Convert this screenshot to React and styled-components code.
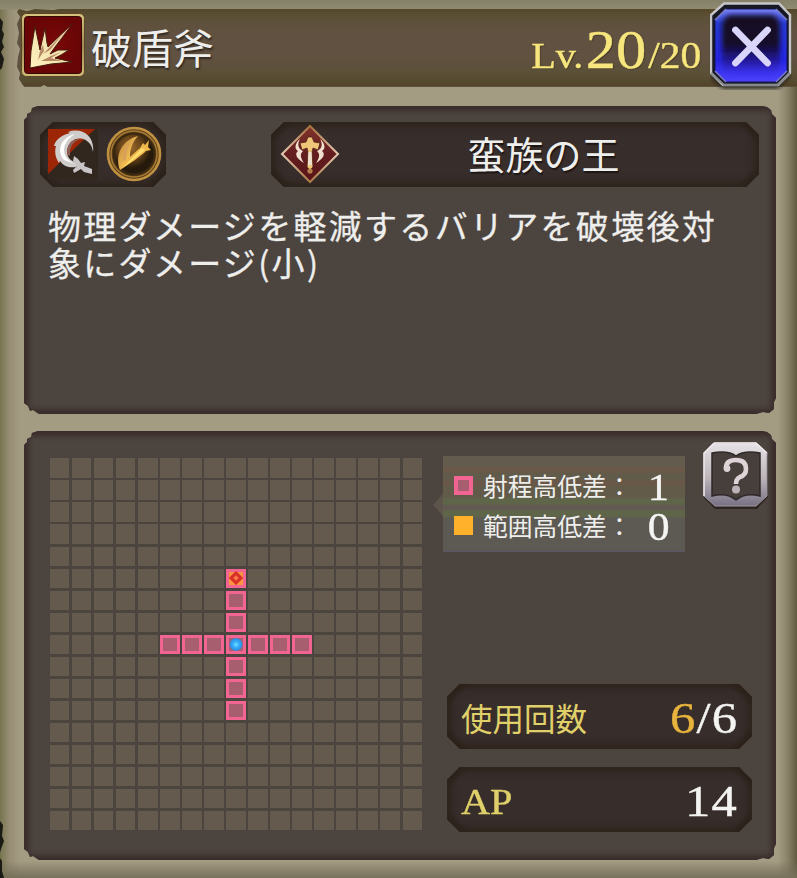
import React from 'react'
import styled, { createGlobalStyle } from 'styled-components'

const SIZE = 17
const CENTER = 8

const cells = Array.from({ length: SIZE * SIZE }, (_, i) => {
    const x = (i % SIZE) - CENTER
    const y = Math.floor(i / SIZE) - CENTER
    if (x === 0 && y === 0) return 'self'
    if (x === 0 && y === -3) return 'target'
    if ((x === 0 && Math.abs(y) <= 3) || (y === 0 && Math.abs(x) <= 3)) return 'range'
    return 'empty'
})

const SkillIcon = () => (
    <svg width="64" height="64" viewBox="0 0 64 64">
        <defs>
            <linearGradient id="frame" x1="0" y1="0" x2="0" y2="1">
                <stop offset="0" stopColor="#d8c57f" />
                <stop offset="0.5" stopColor="#a08a55" />
                <stop offset="1" stopColor="#d2bd78" />
            </linearGradient>
            <linearGradient id="slash" x1="0" y1="1" x2="1" y2="0">
                <stop offset="0" stopColor="#fff3c0" />
                <stop offset="0.6" stopColor="#f1dfab" />
                <stop offset="1" stopColor="#d89a82" />
            </linearGradient>
            <radialGradient id="red">
                <stop offset="0" stopColor="#7c0808" />
                <stop offset="1" stopColor="#680506" />
            </radialGradient>
        </defs>
        <rect x="0.5" y="0.5" width="63" height="63" rx="5" fill="url(#frame)" stroke="#594724" />
        <rect x="3.5" y="3.5" width="57" height="57" rx="3" fill="url(#red)" stroke="#350908" />
        <path
            d="M9 55 L10 38 L14 13 L17 27 L19 37 L24 15 L26 30 L27 34 L52 10 L41 25 L34 34 L29 41 L37 37 L48 37 L40 42 L34 45 L51 49 L30 51 Z"
            fill="url(#slash)"
            stroke="#45190d"
            strokeWidth="1"
        />
        <path d="M17 47 L19 38 L22 32 L23 38 Z M22 41 L40 23 L29 37 Z M20 48 L30 43 L40 39 L30 45 L41 48 Z" fill="#8c4a30" opacity="0.6" />
    </svg>
)

const CloseIcon = () => (
    <svg width="82" height="88" viewBox="0 0 82 88">
        <defs>
            <linearGradient id="blue" x1="0" y1="0" x2="0" y2="1">
                <stop offset="0" stopColor="#171022" />
                <stop offset="0.5" stopColor="#120d29" />
                <stop offset="0.75" stopColor="#211593" />
                <stop offset="1" stopColor="#3e35f6" />
            </linearGradient>
            <linearGradient id="rim" x1="0" y1="0" x2="0" y2="1">
                <stop offset="0" stopColor="#7d86fb" />
                <stop offset="0.2" stopColor="#263bd2" />
                <stop offset="0.7" stopColor="#2525e5" />
                <stop offset="1" stopColor="#4d43fc" />
            </linearGradient>
            <filter id="soft"><feGaussianBlur stdDeviation="2.2" /></filter>
            <filter id="inner"><feGaussianBlur stdDeviation="2.5" /></filter>
        </defs>
        <path d="M14 7 H69 L80 18 V73 L68 87 H13 L1 75 V17 Z" fill="#171412" opacity="0.8" filter="url(#soft)" />
        <path d="M14 1.5 H69 L80 13 V71 L68 83 H13 L1 71 V13 Z" fill="#171824" stroke="#c5c5c7" strokeWidth="2.5" />
        <path d="M14 83 L1 71 M68 83 L80 71 M13 83 H68" stroke="#868a8e" strokeWidth="2" />
        <path d="M16 7 H66 L77 18 V69 L66 80 H16 L5 69 V18 Z" fill="url(#rim)" stroke="#141750" strokeWidth="1" />
        <path d="M20 13 H62 Q70 16 70 24 V60 Q69 70 62 72 H20 Q12 70 12 60 V24 Q12 16 20 13 Z" fill="url(#blue)" filter="url(#inner)" />
        <path d="M5 18 L16 7 M66 7 L77 18 M77 69 L66 80 M16 80 L5 69" stroke="#777ac4" strokeWidth="1.5" />
        <path d="M25.5 28 L57.5 61 M57.5 28 L25.5 61" stroke="#d9d5fa" strokeWidth="6.8" strokeLinecap="round" />
    </svg>
)

const MoonSword = () => (
    <svg width="50" height="50" viewBox="0 0 50 50">
        <rect width="50" height="50" fill="#32271f" />
        <path d="M0 0 H47 L0 45 Z" fill="#9c2605" />
        <path
            d="M45 23 C47 7 34 -2 20 3 L22 4 C10 7 7 13 6 17 L8 17 C6 24 8 30 11 34 L12 32 C16 38 22 39 28 38 L31 34 C23 33 19 29 19 22 C20 13 27 8 35 10 C41 12 44 16 45 23 Z"
            fill="#cfcccc"
        />
        <path d="M27 5 C11 9 9 23 16 31 L27 35 C18 31 14 24 17 16 Q20 9 27 5 Z" fill="#fff" />
        <path d="M20 26 C17 15 25 9 34 10 C26 11 21 17 22 27 Z" fill="#8a625c" />
        <path d="M26 27 L30 30 L33 34 L37 33 L36 37 L44 40 L44 45 L36 43 L33 40 L26 44 L25 41 L29 37 L25 32 Z" fill="#c9c5c6" />
    </svg>
)

const GoldCoin = () => (
    <svg width="56" height="56" viewBox="0 0 56 56">
        <defs>
            <radialGradient id="coin" cx="0.42" cy="0.35">
                <stop offset="0" stopColor="#9a692b" />
                <stop offset="0.55" stopColor="#684419" />
                <stop offset="1" stopColor="#251a0c" />
            </radialGradient>
            <linearGradient id="gold" x1="0" y1="0" x2="1" y2="1">
                <stop offset="0" stopColor="#b87c34" />
                <stop offset="0.6" stopColor="#eebe55" />
                <stop offset="1" stopColor="#df9335" />
            </linearGradient>
        </defs>
        <circle cx="28" cy="28" r="26" fill="#5b3f19" stroke="#bf9140" strokeWidth="2.6" />
        <circle cx="28" cy="28" r="23" fill="none" stroke="#a67a34" strokeWidth="1.5" />
        <circle cx="28" cy="28" r="20.5" fill="url(#coin)" stroke="#3a2811" strokeWidth="2" />
        <path d="M14 44 C9 31 14 15 32 10 C26 17 24 23 24 31 Z" fill="url(#gold)" />
        <path d="M17 35 C16 25 20 18 27 13 C21 21 20 28 20 34 Z" fill="#d9a05a" />
        <path d="M14 44 L18 36 L34 22 L37 17 L39 19 L43 14 L42 21 L45 24 L40 25 L38 27 L29 34 Z" fill="#efb64a" />
        <path d="M15 43 L36 22 L39 24 L27 34 Z" fill="#ffdf70" />
    </svg>
)

const AxeCrest = () => (
    <svg width="60" height="60" viewBox="0 0 60 60">
        <defs>
            <linearGradient id="crest" x1="0" y1="0" x2="0" y2="1">
                <stop offset="0" stopColor="#803329" />
                <stop offset="0.5" stopColor="#641e20" />
                <stop offset="1" stopColor="#571418" />
            </linearGradient>
            <linearGradient id="edge" x1="0" y1="0" x2="0" y2="1">
                <stop offset="0" stopColor="#a7713f" />
                <stop offset="0.5" stopColor="#e5cbb4" />
                <stop offset="1" stopColor="#a97845" />
            </linearGradient>
        </defs>
        <path d="M30 2 L58 30 L30 58 L2 30 Z" fill="url(#crest)" stroke="url(#edge)" strokeWidth="2" />
        <path d="M20 15 C15 19 14 25 18 27 C14 30 17 35 24 39 C20 33 20 30 23 27 C18 25 17 20 20 15 Z" fill="#f2dfce" />
        <path d="M40 15 C45 19 46 25 42 27 C46 30 43 35 36 39 C40 33 40 30 37 27 C42 25 43 20 40 15 Z" fill="#f2dfce" />
        <path d="M20 19 L26 18 L28 13 H32 L34 18 L40 19 L38 26 L33 24 L32 28 L33 43 L30 46 L27 43 L28 28 L27 24 L22 26 Z" fill="#efc778" stroke="#51251b" strokeWidth="0.8" />
        <path d="M28.5 28 H31.5 L32 41 H28 Z" fill="#eee1d4" />
        <circle cx="30" cy="47" r="2.6" fill="#b47f47" />
    </svg>
)

const HelpBook = () => (
    <svg width="66" height="68" viewBox="0 0 66 68">
        <defs>
            <linearGradient id="silver" x1="0" y1="0" x2="0" y2="1">
                <stop offset="0" stopColor="#e6e2e5" />
                <stop offset="0.55" stopColor="#beb5b9" />
                <stop offset="1" stopColor="#777084" />
            </linearGradient>
        </defs>
        <path d="M12 4 H54 L65 15 V55 L54 67 H12 L1 56 Z" fill="#211b19" opacity="0.75" />
        <path d="M11 1 H53 L64 11 V54 L53 64 H12 L1 54 V11 Z" fill="url(#silver)" stroke="#9d969a" strokeWidth="1" />
        <path d="M11 1 H53 L64 11 M1 54 V11 L11 1" fill="none" stroke="#f3edf0" strokeWidth="1.5" />
        <path d="M9 11 Q25 8 33 14 Q41 8 57 11 V54 Q42 50 33 58 Q24 50 9 54 Z" fill="#463f3b" stroke="#2e2929" strokeWidth="1.5" />
        <path d="M23 26 Q23 18 33 18 Q43 18 43 27 Q43 33 37 35 Q33 37 33 42" fill="none" stroke="#ded3d7" strokeWidth="4.6" />
        <circle cx="24" cy="26.5" r="3.4" fill="#ded3d7" />
        <circle cx="33" cy="47.5" r="4" fill="#bdb2b9" />
    </svg>
)

const App = () => {
    return (
        <>
            <GlobalStyle />
            <Main>
                <Torn $top={14} width="8" height="60" viewBox="0 0 8 60">
                    <path d="M0 4 L3 8 L2 16 L4 20 L2 28 L4 33 L1 38 L4 45 L2 54 L0 56 Z" />
                </Torn>
                <Torn $top={818} width="8" height="60" viewBox="0 0 8 60">
                    <path d="M0 3 L3 7 L2 18 L4 23 L1 31 L0 35 Z M0 40 L2 43 L2 53 L4 60 H0 Z" />
                </Torn>
                <Header>
                    <SkillIcon />
                    <Title>破盾斧</Title>
                    <Level>
                        <Num $size={36}>Lv.</Num>
                        <Num $size={54}>20</Num>
                        <Num $size={37}>/20</Num>
                    </Level>
                    <CloseButton aria-label="閉じる"><CloseIcon /></CloseButton>
                </Header>

                <Panel $height={308} $top={19}>
                    <Tags>
                        <Slot $width={126} $pad={8}>
                            <MoonSword />
                            <GoldCoin />
                        </Slot>
                        <Slot $width={488} $pad={9}>
                            <AxeCrest />
                            <Name>蛮族の王</Name>
                        </Slot>
                    </Tags>
                    <Description>物理ダメージを軽減するバリアを破壊後対象にダメージ(小)</Description>
                </Panel>

                <Panel $height={429} $top={17}>
                    <Body>
                        <Grid>
                            {cells.map((type, i) => (
                                <Cell key={i} $type={type} />
                            ))}
                        </Grid>
                        <Side>
                            <SideTop>
                                <Legend>
                                    <LegendRow>
                                        <Swatch $pink />
                                        射程高低差：
                                        <Value><Num $size={38}>1</Num></Value>
                                    </LegendRow>
                                    <LegendRow>
                                        <Swatch />
                                        範囲高低差：
                                        <Value><Num $size={39}>0</Num></Value>
                                    </LegendRow>
                                </Legend>
                                <HelpButton aria-label="ヘルプ"><HelpBook /></HelpButton>
                            </SideTop>
                            <Stats>
                                <Slot $width={305} $pad={14}>
                                    <Label>使用回数</Label>
                                    <Amount $size={44}><Used>6</Used>/6</Amount>
                                </Slot>
                                <Slot $width={305} $pad={14}>
                                    <Label><Num $size={36}>AP</Num></Label>
                                    <Amount $size={44}>14</Amount>
                                </Slot>
                            </Stats>
                        </Side>
                    </Body>
                </Panel>
            </Main>
        </>
    )
}

export default App

// CSS

const GlobalStyle = createGlobalStyle`
body {
margin: 0;
overflow: hidden;
}
*, *::before, *::after {
box-sizing: border-box;
}
`

const Main = styled.div`
position: relative;
width: 797px;
height: 878px;
overflow: hidden;
font-family: "Noto Sans CJK JP", sans-serif;
color: #eeeeec;
background:
    linear-gradient(to bottom, #858169 0, #8f8a70 9px, transparent 10px),
    linear-gradient(to top, #77705a 0, transparent 17px),
    linear-gradient(to right, #77744f 0, #958c73 9px, transparent 20px),
    linear-gradient(to left, #625b42 0, #8b836a 10px, transparent 19px),
    #a39b82;
`

const Torn = styled.svg`
position: absolute;
top: ${(p) => p.$top}px;
left: 0;
fill: #1c1a15;
filter: blur(0.7px);
`

const Header = styled.header`
display: flex;
align-items: center;
width: 780px;
height: 78px;
margin: 9px 0 0 17px;
padding: 0 0 6px 4px;
background: linear-gradient(to bottom, #554727 0, #5c5038 8px, #615140 22px, #615141 48px, #5a5036 66px, #524429 77px, #68604d 78px);
clip-path: polygon(2px 0, 10px 2px, 18px 0, 36px 1px, 42px 0, 685px 0, 685px -20px, 100% -20px, 100% 100px, 685px 100px, 685px 100%, 50px 100%, 46px 79px, 40px 78px, 34px 80px, 27px 76px, 20px 80px, 9px 80px, 5px 75px, 2px 70px, 3px 64px, 0 58px, 1px 48px, 3px 40px, 0 34px, 2px 24px, 0 15px, 3px 8px, 0 3px);
`

const Title = styled.h1`
margin: 2px 0 0 6px;
font-size: 41px;
font-weight: 400;
line-height: 60px;
text-shadow: 1px 2px 2px #302820;
`

const Level = styled.div`
display: flex;
align-items: baseline;
gap: 8px;
margin-left: auto;
margin-top: 10px;
color: #f6e67d;
text-shadow: 1px 1px 1px #493d28;
`

const Num = styled.span`
display: inline-block;
font-family: "Liberation Serif", serif;
font-size: ${(p) => p.$size}px;
line-height: 1;
transform: scaleX(1.12);
-webkit-text-stroke: 0.4px currentColor;
`

const CloseButton = styled.button`
width: 82px;
height: 88px;
margin: 1px 5px 0 12px;
padding: 0;
border: none;
background: none;
cursor: pointer;
`

const Panel = styled.section`
width: 752px;
height: ${(p) => p.$height}px;
margin: ${(p) => p.$top}px 0 0 24px;
background: #4c443f;
box-shadow: inset 0 0 5px 5px #3b2d2b;
clip-path: polygon(0 14px, 3px 11px, 3px 8px, 7px 6px, 8px 2px, 14px 0, 738px 0, 743px 1px, 747px 4px, 748px 8px, 752px 12px, 752px calc(100% - 16px), 750px calc(100% - 12px), 750px calc(100% - 5px), 745px calc(100% - 1px), 739px calc(100% - 2px), 732px 100%, 15px 100%, 9px calc(100% - 4px), 6px calc(100% - 3px), 4px calc(100% - 8px), 0 calc(100% - 11px));
`

const Tags = styled.div`
display: flex;
justify-content: space-between;
padding: 16px 17px 0 16px;
`

const Slot = styled.div`
display: flex;
align-items: center;
gap: 8px;
width: ${(p) => p.$width}px;
height: 65px;
padding: 0 ${(p) => p.$pad}px;
background:
    linear-gradient(135deg, #2b2119 10px, transparent 18px),
    linear-gradient(225deg, #2b2119 10px, transparent 18px),
    linear-gradient(45deg, #2b2119 10px, transparent 18px),
    linear-gradient(315deg, #2b2119 10px, transparent 18px),
    #372d2b;
box-shadow: inset 0 0 8px 4px #2d231b;
clip-path: polygon(13px 0, calc(100% - 13px) 0, 100% 13px, 100% calc(100% - 13px), calc(100% - 13px) 100%, 13px 100%, 0 calc(100% - 13px), 0 13px);

svg {
flex-shrink: 0;
margin-top: -2px;
}
`

const Name = styled.div`
flex: 1;
padding: 0 11px 3px 0;
text-align: center;
font-size: 38px;
line-height: 56px;
text-shadow: 1px 2px 1px #1d1716;
`

const Description = styled.p`
margin: 20px 38px 0 24px;
font-size: 33px;
line-height: 37px;
letter-spacing: 2.3px;
-webkit-text-stroke: 0.3px currentColor;
`

const Body = styled.div`
display: flex;
height: 100%;
padding: 11px 9px 28px 26px;
`

const Grid = styled.div`
display: grid;
grid-template-columns: repeat(17, 19.4px);
grid-auto-rows: 19.4px;
gap: 2.65px;
margin-top: 16.4px;
`

const cellColors = {
    empty: '#645b4e',
    range: '#a75f70',
    self: 'radial-gradient(circle, #7ae4ff 0, #3cb4fa 2.5px, #2a93ec 5.5px, #a75f70 7px) border-box',
    target: '#f9963d',
}

const Cell = styled.div`
display: flex;
align-items: center;
justify-content: center;
background: ${(p) => cellColors[p.$type]};
border: ${(p) => (p.$type === 'empty' ? 'none' : '3px solid #f26592')};
${(p) =>
    p.$type === 'target' &&
    `
&::after {
content: '';
flex-shrink: 0;
width: 10px;
height: 10px;
border: 3px solid #d83028;
background: #f8784a;
transform: rotate(45deg);
}
`}
`

const Side = styled.div`
display: flex;
flex: 1;
flex-direction: column;
justify-content: space-between;
margin-left: 21px;
`

const SideTop = styled.div`
display: flex;
align-items: flex-start;
justify-content: space-between;
`

const Legend = styled.div`
position: relative;
width: 242px;
height: 96px;
margin-top: 14px;
padding: 9px 8px 0 11px;
background: linear-gradient(to bottom, #635b4d 0 10px, #6a5948 11px 16px, #615b4b 18px 23px, #695848 25px 29px, #625b4a 31px 41px, #5e6549 43px 48px, #625951 50px 53px, #5e6549 55px 60px, #5d5a54 62px 94px, #56546a 96px);
&::before {
content: '';
position: absolute;
left: -10px;
top: 38px;
border: solid transparent;
border-width: 11px 10px 11px 0;
border-right-color: #5d554b;
}
`

const LegendRow = styled.div`
display: flex;
align-items: center;
height: 40px;
font-size: 24.8px;
white-space: nowrap;
`

const Swatch = styled.span`
width: 19px;
height: 19px;
margin-right: 10px;
border: ${(p) => (p.$pink ? '4px solid #f26592' : 'none')};
background: ${(p) => (p.$pink ? '#a75f70' : '#ffb12b')};
`

const Value = styled.span`
display: flex;
justify-content: center;
width: 36px;
margin-left: auto;
padding-top: 3px;
color: #f4f4f2;
`

const HelpButton = styled.button`
width: 66px;
height: 68px;
margin-right: -2px;
padding: 0;
border: none;
background: none;
cursor: pointer;
`

const Stats = styled.div`
display: flex;
flex-direction: column;
gap: 18px;
margin-left: 4px;
`

const Label = styled.div`
font-size: 31.5px;
line-height: 60px;
color: #e0d069;
span {
transform-origin: left;
}
`

const Amount = styled(Num)`
margin-left: auto;
padding-top: 4px;
letter-spacing: 1px;
transform: scaleX(1.15);
transform-origin: right;
color: #f3f3f1;
`

const Used = styled.span`
color: #e8b33d;
`
